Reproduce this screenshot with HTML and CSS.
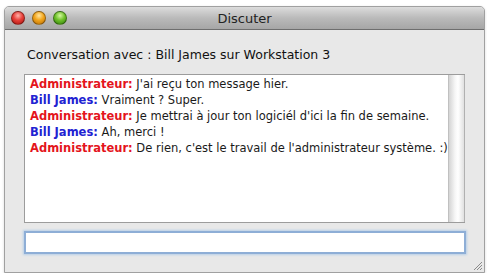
FILE: index.html
```html
<!DOCTYPE html>
<html lang="fr">

<head>
    <meta charset="UTF-8">
    <title>Discuter</title>
    <link rel="stylesheet" href="styles.css">
</head>

<body>
    <div id="window">
        <div id="titlebar">
            <div class="lights">
                <span class="light red"></span>
                <span class="light orange"></span>
                <span class="light green"></span>
            </div>
            <div id="title">Discuter</div>
        </div>

        <div id="content">
            <div id="label">Conversation avec : Bill James sur Workstation 3</div>

            <div id="chat">
                <div id="messages">
                    <div><span class="admin">Administrateur:</span> J'ai reçu ton message hier.</div>
                    <div><span class="bill">Bill James:</span> Vraiment ? Super.</div>
                    <div><span class="admin">Administrateur:</span> Je mettrai à jour ton logiciél d'ici la fin de semaine.</div>
                    <div><span class="bill">Bill James:</span> Ah, merci !</div>
                    <div><span class="admin">Administrateur:</span> De rien, c'est le travail de l'administrateur système. :)</div>
                </div>
                <div id="scrollbar"></div>
            </div>

            <input id="message" type="text">
        </div>

        <!-- poignée de redimensionnement -->
        <svg id="grip" width="11" height="11" viewBox="0 0 11 11">
            <path d="M10 2 L2 10 M10 5 L5 10 M10 8 L8 10" stroke="#8a8a8a" stroke-width="1" />
        </svg>
    </div>
</body>

</html>
```

FILE: styles.css
```css
* {
    box-sizing: border-box;
}

body {
    margin: 0;
    background: #ffffff;
    font-family: 'DejaVu Sans', sans-serif;
}

#window {
    position: relative;
    margin: 6px 0 0 4px;
    width: 481px;
    height: 267px;
    background: #e8e8e8;
    border: 1px solid #a0a0a0;
    border-radius: 5px 5px 0 0;
    box-shadow: 0 1px 3px rgba(0, 0, 0, 0.15);
    overflow: hidden;
}

#titlebar {
    position: relative;
    height: 23px;
    background: linear-gradient(#dcdcdc, #bababa 50%, #a6a6a6);
    border-bottom: 1px solid #6e6e6e;
    display: flex;
    align-items: center;
}

.lights {
    display: flex;
    gap: 7px;
    padding-left: 6px;
}

.light {
    width: 14px;
    height: 14px;
    border-radius: 50%;
    border: 1px solid rgba(0, 0, 0, 0.35);
}

.red {
    background: radial-gradient(circle at 50% 30%, #ffb0a8, #e8413a 45%, #a8120c);
}

.orange {
    background: radial-gradient(circle at 50% 30%, #ffe6a0, #f2a51c 45%, #b86d04);
}

.green {
    background: radial-gradient(circle at 50% 30%, #d6f7a0, #70c22c 45%, #2f7d08);
}

#title {
    position: absolute;
    left: 0;
    right: 0;
    top: 4px;
    text-align: center;
    font-size: 13px;
    color: #222;
}

#content {
    padding: 17px 18px 0 19px;
}

#label {
    font-size: 12.5px;
    color: #111;
    height: 27px;
    padding-left: 3px;
}

#chat {
    display: flex;
    height: 149px;
    background: #ffffff;
    border: 1px solid #9c9c9c;
    border-right: none;
    margin-right: 1px;
}

#messages {
    flex: 1;
    padding: 1px 0 0 5px;
    font-size: 11.5px;
    line-height: 16px;
    color: #1a1a1a;
    white-space: nowrap;
}

.admin {
    color: #e4141c;
    font-weight: bold;
}

.bill {
    color: #2222d2;
    font-weight: bold;
}

#scrollbar {
    width: 17px;
    background: linear-gradient(to right, #d4d4d4, #f6f6f6 40%, #ffffff 60%, #e0e0e0);
    border-left: 1px solid #c0c0c0;
    border-right: 1px solid #b0b0b0;
}

#message {
    display: block;
    margin-top: 8px;
    width: 442px;
    height: 23px;
    border: 2px solid #8eaed6;
    box-shadow: 0 0 2px 1px #b8cfe8;
    background: #ffffff;
    outline: none;
}

#grip {
    position: absolute;
    right: 1px;
    bottom: 1px;
}
```
